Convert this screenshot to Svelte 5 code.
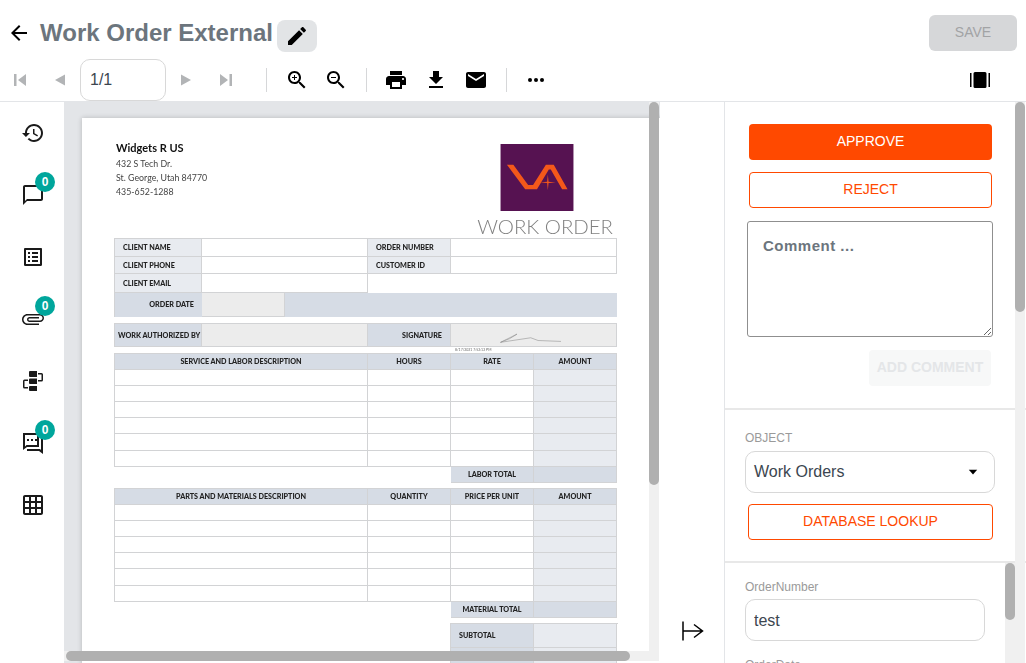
<script>
  const sideItems = [
    { name: "history", badge: false, d: "M13 3c-4.97 0-9 4.03-9 9H1l3.89 3.89.07.14L9 12H6c0-3.87 3.13-7 7-7s7 3.13 7 7-3.13 7-7 7c-1.93 0-3.68-.79-4.94-2.06l-1.42 1.42C8.27 19.99 10.51 21 13 21c4.97 0 9-4.03 9-9s-4.03-9-9-9zm-1 5v5l4.28 2.54.72-1.21-3.5-2.08V8H12z" },
    { name: "comments", badge: true, d: "M20 2H4c-1.1 0-2 .9-2 2v18l4-4h14c1.1 0 2-.9 2-2V4c0-1.1-.9-2-2-2zm0 14H6l-2 2V4h16v12z" },
    { name: "fields", badge: false, d: "M19 5v14H5V5h14m1.1-2H3.9c-.5 0-.9.4-.9.9v16.2c0 .4.4.9.9.9h16.2c.4 0 .9-.5.9-.9V3.9c0-.5-.5-.9-.9-.9zM11 7h6v2h-6V7zm0 4h6v2h-6v-2zm0 4h6v2h-6zM7 7h2v2H7zm0 4h2v2H7zm0 4h2v2H7z" },
    { name: "attachments", badge: true, rot: true, d: "M16.5 6v11.5c0 2.21-1.79 4-4 4s-4-1.79-4-4V5c0-1.38 1.12-2.5 2.5-2.5s2.5 1.12 2.5 2.5v10.5c0 .55-.45 1-1 1s-1-.45-1-1V6H10v9.5c0 1.38 1.12 2.5 2.5 2.5s2.5-1.12 2.5-2.5V5c0-2.21-1.79-4-4-4S7 2.79 7 5v12.5c0 3.04 2.46 5.5 5.5 5.5s5.5-2.46 5.5-5.5V6h-1.5z" },
    { name: "workflow", badge: false, d: "M9 2h7v6H9a1 1 0 0 1-1-1V3a1 1 0 0 1 1-1zM9 9.5h7V15H9a1 1 0 0 1-1-1v-3.5a1 1 0 0 1 1-1zM9 17h7v5H9a1 1 0 0 1-1-1v-3a1 1 0 0 1 1-1zM17 4h3.500a1.500 1.500 0 0 1 1.500 1.500V11a1.500 1.500 0 0 1-1.500 1.500H17V11h3.500V5.500H17zM7 10.500H3.500A1.500 1.500 0 0 0 2 12v6a1.500 1.500 0 0 0 1.500 1.500H7V18H3.500v-6H7z" },
    { name: "conversation", badge: true, d: "M2 2h16v14H6l-4 3zM4 4v11.500L5.500 14H16V4zM6 8h2v2H6zM10 8h2v2h-2zM14 8h2v2h-2zM20 6h2v17l-4-3H6v-2h13l1 1z" },
    { name: "table", badge: false, d: "M20 2H4c-1.100 0-2 .9-2 2v16c0 1.100.9 2 2 2h16c1.100 0 2-.9 2-2V4c0-1.100-.9-2-2-2zM8 20H4v-4h4v4zm0-6H4v-4h4v4zm0-6H4V4h4v4zm6 12h-4v-4h4v4zm0-6h-4v-4h4v4zm0-6h-4V4h4v4zm6 12h-4v-4h4v4zm0-6h-4v-4h4v4zm0-6h-4V4h4v4z" },
  ];

  const blankRows = [1, 2, 3, 4, 5, 6];
</script>

<div class="app">
  <header class="header">
    <div class="title-row">
      <button class="back" aria-label="Back">
        <svg width="24" height="24" viewBox="0 0 24 24"><path d="M20 11H7.830l5.590-5.590L12 4l-8 8 8 8 1.410-1.410L7.830 13H20v-2z"/></svg>
      </button>
      <h1>Work Order External</h1>
      <button class="edit" aria-label="Edit name">
        <svg width="24" height="24" viewBox="0 0 24 24"><path d="M3 17.250V21h3.750L17.810 9.940l-3.750-3.750L3 17.250zM20.710 7.040c.39-.39.39-1.020 0-1.410l-2.340-2.340c-.39-.39-1.020-.39-1.410 0l-1.830 1.830 3.750 3.750 1.830-1.830z"/></svg>
      </button>
      <button class="save" disabled>SAVE</button>
    </div>

    <div class="toolbar">
      <button class="tool off" aria-label="First page">
        <svg width="24" height="24" viewBox="0 0 24 24"><path d="M6 6h2.500v12H6zM18 6v12l-8-6z"/></svg>
      </button>
      <button class="tool off" aria-label="Previous page">
        <svg width="24" height="24" viewBox="0 0 24 24"><path d="M17 6.500v11L7 12z"/></svg>
      </button>
      <div class="page-box">1/1</div>
      <button class="tool off" aria-label="Next page">
        <svg width="24" height="24" viewBox="0 0 24 24"><path d="M7 6.500v11L17 12z"/></svg>
      </button>
      <button class="tool off" aria-label="Last page">
        <svg width="24" height="24" viewBox="0 0 24 24"><path d="M18 6h-2.500v12H18zM6 6v12l8-6z"/></svg>
      </button>
      <span class="sep first"></span>
      <button class="tool narrow" aria-label="Zoom in">
        <svg width="24" height="24" viewBox="0 0 24 24"><path d="M15.500 14h-.79l-.28-.27C15.410 12.590 16 11.110 16 9.500 16 5.910 13.090 3 9.500 3S3 5.910 3 9.500 5.910 16 9.500 16c1.610 0 3.090-.59 4.230-1.570l.27.28v.79l5 4.990L20.490 19l-4.990-5zm-6 0C7.010 14 5 11.990 5 9.500S7.010 5 9.500 5 14 7.010 14 9.500 11.990 14 9.500 14z"/><path d="M12 10h-2v2H9v-2H7V9h2V7h1v2h2v1z"/></svg>
      </button>
      <button class="tool narrow" aria-label="Zoom out">
        <svg width="24" height="24" viewBox="0 0 24 24"><path d="M15.500 14h-.79l-.28-.27C15.410 12.590 16 11.110 16 9.500 16 5.910 13.090 3 9.500 3S3 5.910 3 9.500 5.910 16 9.500 16c1.610 0 3.090-.59 4.230-1.570l.27.28v.79l5 4.990L20.490 19l-4.990-5zm-6 0C7.010 14 5 11.990 5 9.500S7.010 5 9.500 5 14 7.010 14 9.500 11.990 14 9.500 14z"/><path d="M7 9h5v1H7z"/></svg>
      </button>
      <span class="sep"></span>
      <button class="tool" aria-label="Print">
        <svg width="24" height="24" viewBox="0 0 24 24"><path d="M19 8H5c-1.660 0-3 1.340-3 3v6h4v4h12v-4h4v-6c0-1.660-1.340-3-3-3zm-3 11H8v-5h8v5zm3-7c-.55 0-1-.45-1-1s.45-1 1-1 1 .45 1 1-.45 1-1 1zm-1-9H6v4h12V3z"/></svg>
      </button>
      <button class="tool" aria-label="Download">
        <svg width="24" height="24" viewBox="0 0 24 24"><path d="M19 9h-4V3H9v6H5l7 7 7-7zM5 18v2h14v-2H5z"/></svg>
      </button>
      <button class="tool" aria-label="Email">
        <svg width="24" height="24" viewBox="0 0 24 24"><path d="M20 4H4c-1.100 0-1.990.9-1.990 2L2 18c0 1.100.9 2 2 2h16c1.100 0 2-.9 2-2V6c0-1.100-.9-2-2-2zm0 4l-8 5-8-5V6l8 5 8-5v2z"/></svg>
      </button>
      <span class="sep last"></span>
      <button class="tool" aria-label="More">
        <svg width="24" height="24" viewBox="0 0 24 24"><circle cx="6" cy="12" r="2"/><circle cx="12" cy="12" r="2"/><circle cx="18" cy="12" r="2"/></svg>
      </button>
      <button class="tool view" aria-label="Page view">
        <svg width="24" height="24" viewBox="0 0 24 24"><path d="M2 5h1.500v14H2zM20.500 5H22v14h-1.500zM7 4h10a1.500 1.500 0 0 1 1.500 1.500v13A1.500 1.500 0 0 1 17 20H7a1.500 1.500 0 0 1-1.500-1.500v-13A1.500 1.500 0 0 1 7 4z"/></svg>
      </button>
    </div>
  </header>

  <main class="main">
    <nav class="sidebar">
      {#each sideItems as item}
        <button class="side-item" aria-label={item.name}>
          <svg class:rot={item.rot} width="24" height="24" viewBox="0 0 24 24"><path d={item.d}/></svg>
          {#if item.badge}
            <span class="badge">0</span>
          {/if}
        </button>
      {/each}
    </nav>

    <section class="viewer">
      <div class="sheet">
        <div class="sheet-head">
          <div class="company">
            <div class="company-name">Widgets R US</div>
            <div>432 S Tech Dr.</div>
            <div>St. George, Utah 84770</div>
            <div>435-652-1288</div>
          </div>
          <div class="brand">
            <svg class="logo" width="74" height="68" viewBox="0 0 74 68">
              <rect width="74" height="68" fill="#561251"/>
              <path d="M6.500 21H13l15 20.500h5L46 21h8l14 25h-5.500L51 26h-2L37 46H25z" fill="#f4581a"/>
              <path d="M48 31l.7 7.300 7.300.7-7.300.7-.7 7.300-.7-7.300-7.300-.7 7.300-.7z" fill="#f4581a"/>
            </svg>
            <div class="brand-title">WORK ORDER</div>
          </div>
        </div>

        <div class="grid client">
          <div class="cell label">CLIENT NAME</div><div class="cell"></div>
          <div class="cell label">ORDER NUMBER</div><div class="cell"></div>
          <div class="cell label">CLIENT PHONE</div><div class="cell"></div>
          <div class="cell label">CUSTOMER ID</div><div class="cell"></div>
          <div class="cell label">CLIENT EMAIL</div><div class="cell"></div>
          <div class="cell-empty"></div>
          <div class="order-date">
            <div class="cell label strong right">ORDER DATE</div>
            <div class="cell gray"></div>
            <div class="cell strong"></div>
          </div>
        </div>

        <div class="grid auth">
          <div class="cell label strong">WORK AUTHORIZED BY</div>
          <div class="cell gray"></div>
          <div class="cell label strong right">SIGNATURE</div>
          <div class="cell gray">
            <svg class="signature" viewBox="0 0 166 24">
              <path d="M47 20L65 11l-8 5-10 4 33-5 8 3 25 1" fill="none" stroke="#8a8a8a" stroke-width=".6"/>
            </svg>
          </div>
        </div>
        <div class="timestamp">8/17/2021 7:52:12 PM</div>

        <div class="grid lines">
          <div class="cell head">SERVICE AND LABOR DESCRIPTION</div>
          <div class="cell head">HOURS</div>
          <div class="cell head">RATE</div>
          <div class="cell head">AMOUNT</div>
          {#each blankRows as r (r)}
            <div class="cell row"></div><div class="cell row"></div><div class="cell row"></div><div class="cell row tint"></div>
          {/each}
          <div class="cell-gap"></div>
          <div class="cell head total">LABOR TOTAL</div>
          <div class="cell head total"></div>
        </div>

        <div class="grid lines second">
          <div class="cell head">PARTS AND MATERIALS DESCRIPTION</div>
          <div class="cell head">QUANTITY</div>
          <div class="cell head">PRICE PER UNIT</div>
          <div class="cell head">AMOUNT</div>
          {#each blankRows as r (r)}
            <div class="cell row"></div><div class="cell row"></div><div class="cell row"></div><div class="cell row tint"></div>
          {/each}
          <div class="cell-gap"></div>
          <div class="cell head total">MATERIAL TOTAL</div>
          <div class="cell head total"></div>
        </div>

        <div class="summary">
          <div class="cell label strong">SUBTOTAL</div>
          <div class="cell tint"></div>
          <div class="cell label strong"></div>
          <div class="cell tint"></div>
        </div>
      </div>

      <div class="bar-track vertical"><div class="bar-thumb"></div></div>
      <div class="bar-track horizontal"><div class="bar-thumb"></div></div>
    </section>

    <div class="gutter">
      <button class="collapse" aria-label="Collapse panel">
        <svg width="24" height="24" viewBox="0 0 24 24" fill="none" stroke="#000" stroke-width="1.500"><path d="M3 2.500v19M3 12h19M14 5.500L22.500 12 14 18.500"/></svg>
      </button>
    </div>

    <aside class="panel">
      <section class="actions">
        <button class="btn solid">APPROVE</button>
        <button class="btn outline">REJECT</button>
        <textarea class="comment" placeholder="Comment ..."></textarea>
        <button class="add-comment" disabled>ADD COMMENT</button>
      </section>

      <section class="object">
        <div class="field-label">OBJECT</div>
        <div class="select">
          <span>Work Orders</span>
          <svg width="10" height="6" viewBox="0 0 10 6"><path d="M.8.8h8.400L5 5.400z"/></svg>
        </div>
        <button class="btn outline lookup">DATABASE LOOKUP</button>
      </section>

      <section class="fields">
        <div class="field-label">OrderNumber</div>
        <input class="text-input" value="test" />
        <div class="field-label next">OrderDate</div>
        <div class="bar-track inner"><div class="bar-thumb"></div></div>
      </section>

      <div class="bar-track outer"><div class="bar-thumb"></div></div>
    </aside>
  </main>
</div>

<style>
  :global(body) {
    font-family: "Liberation Sans", Arial, sans-serif;
    background: #fff;
  }
  button {
    font-family: inherit;
    border: none;
    background: none;
    padding: 0;
  }
  .app {
    width: 1026px;
    height: 663px;
    display: flex;
    flex-direction: column;
    overflow: hidden;
  }

  /* header */
  .header {
    height: 102px;
    box-sizing: border-box;
    border-bottom: 1px solid #e3e5e8;
  }
  .title-row {
    display: flex;
    align-items: center;
    height: 36px;
    padding: 15px 9px 8px 7px;
  }
  .back {
    display: flex;
    width: 33px;
  }
  h1 {
    margin: 0 4px 0 0;
    font-size: 24px;
    font-weight: 700;
    color: #6c757d;
    white-space: nowrap;
  }
  .edit {
    display: flex;
    align-items: center;
    justify-content: center;
    width: 40px;
    height: 32px;
    margin-top: 6px;
    background: #e2e4e6;
    border-radius: 8px;
  }
  .save {
    margin-left: auto;
    width: 88px;
    height: 36px;
    background: #d6d7d9;
    border-radius: 6px;
    color: #a2a3a5;
    font-size: 14px;
    padding-bottom: 2px;
  }
  .toolbar {
    display: flex;
    align-items: center;
    height: 42px;
  }
  .tool {
    display: flex;
    align-items: center;
    justify-content: center;
    width: 40px;
    height: 42px;
  }
  .tool.narrow {
    width: 39px;
  }
  .tool.off svg {
    fill: #b2b4b6;
  }
  .tool.view {
    margin: 0 26px 0 auto;
  }
  .page-box {
    display: flex;
    align-items: center;
    width: 86px;
    height: 42px;
    box-sizing: border-box;
    padding-left: 9px;
    border: 1px solid #d8d8d8;
    border-radius: 10px;
    font-size: 16px;
    color: #3c4650;
  }
  .sep {
    width: 1px;
    height: 24px;
    margin: 0 9px 0 11px;
    background: #d6d7d9;
  }
  .sep.first {
    margin-left: 20px;
    margin-right: 10px;
  }
  .sep.last {
    margin-left: 10px;
  }

  /* layout */
  .main {
    flex: 1;
    display: flex;
    min-height: 0;
  }
  .sidebar {
    width: 64px;
    flex: none;
  }
  .side-item {
    position: relative;
    display: flex;
    align-items: center;
    justify-content: center;
    width: 64px;
    height: 62px;
    padding-left: 2px;
  }
  .side-item svg {
    fill: #1a1a1a;
  }
  .side-item svg.rot {
    transform: rotate(90deg);
  }
  .badge {
    position: absolute;
    left: 35px;
    top: 8px;
    width: 20px;
    height: 20px;
    line-height: 20px;
    border-radius: 50%;
    background: #00a69c;
    color: #fff;
    font-size: 12px;
    font-weight: 700;
    text-align: center;
  }

  /* document viewer */
  .viewer {
    position: relative;
    width: 596px;
    flex: none;
    box-sizing: border-box;
    padding: 16px 0 0 18px;
    background: #e3e5e8;
    overflow: hidden;
  }
  .sheet {
    width: 600px;
    height: 700px;
    box-sizing: border-box;
    padding-left: 32px;
    background: #fff;
    box-shadow: 0 0 5px rgba(0, 0, 0, 0.2);
    font-family: Lato, "Liberation Sans", sans-serif;
    filter: blur(0.4px);
  }
  .sheet-head {
    display: flex;
    justify-content: space-between;
    width: 503px;
    height: 120px;
  }
  .company {
    padding: 23px 0 0 2px;
    font-size: 8.800px;
    line-height: 14px;
    color: #444;
  }
  .company-name {
    margin-bottom: 2px;
    font-size: 11px;
    font-weight: 700;
    color: #111;
  }
  .brand {
    display: flex;
    flex-direction: column;
    align-items: flex-end;
    padding: 26px 4px 0 0;
  }
  .logo {
    display: block;
    margin-right: 39px;
  }
  .brand-title {
    margin-top: 3px;
    font-size: 20.400px;
    font-weight: 300;
    line-height: 24px;
    color: #808080;
    white-space: nowrap;
  }

  .grid {
    display: grid;
    width: 503px;
    box-sizing: border-box;
    border-top: 1px solid #d2d3d5;
    border-left: 1px solid #d2d3d5;
  }
  .cell {
    box-sizing: border-box;
    min-width: 0;
    border-right: 1px solid #d2d3d5;
    border-bottom: 1px solid #d2d3d5;
    font-size: 7.200px;
    font-weight: 900;
    color: #222;
  }
  .client {
    grid-template-columns: 87px 166px 83px 1fr;
    grid-template-rows: 18px 17px 19px 24px;
  }
  .auth {
    grid-template-columns: 87px 166px 83px 1fr;
    grid-template-rows: 23px;
    margin-top: 6px;
  }
  .label {
    display: flex;
    align-items: center;
    padding-left: 8px;
    background: #e8ebf0;
  }
  .label.strong,
  .strong {
    background: #d6dce5;
    border-color: #d6dce5;
  }
  .auth .label.strong {
    padding-left: 3px;
    border-color: #d2d3d5;
    white-space: nowrap;
  }
  .right {
    justify-content: flex-end;
    padding: 0 7px 0 0;
  }
  .auth .right {
    padding: 0 8px 0 0;
  }
  .gray {
    background: #ececec;
  }
  .order-date {
    grid-column: 1 / -1;
    display: grid;
    grid-template-columns: 87px 83px 1fr;
  }
  .signature {
    display: block;
    width: 100%;
    height: 100%;
  }
  .timestamp {
    height: 6px;
    padding-left: 341px;
    font-size: 3.500px;
    line-height: 6px;
    color: #666;
    white-space: nowrap;
  }
  .lines {
    grid-template-columns: 253px 83px 83px 1fr;
    grid-auto-rows: 16.100px;
  }
  .lines.second {
    margin-top: 5px;
    grid-auto-rows: 16.150px;
  }
  .head {
    display: flex;
    align-items: center;
    justify-content: center;
    background: #d6dce5;
    white-space: nowrap;
  }
  .tint {
    background: #e8ebf0;
  }
  .cell-gap {
    grid-column: 1 / 3;
    margin-left: -1px;
    background: #fff;
  }
  .summary {
    display: grid;
    grid-template-columns: 83px 83px;
    grid-auto-rows: 24px;
    width: 167px;
    margin: 5px 0 0 336px;
    border-top: 1px solid #d2d3d5;
    border-left: 1px solid #d2d3d5;
  }
  .summary .label {
    border-color: #d2d3d5;
  }

  /* scrollbars */
  .bar-track {
    position: absolute;
    background: #f0f0f0;
  }
  .bar-thumb {
    background: #b0b0b0;
    border-radius: 5px;
  }
  .vertical {
    left: 585px;
    top: 0;
    width: 10px;
    height: 549px;
  }
  .vertical .bar-thumb {
    height: 383px;
  }
  .horizontal {
    left: 0;
    top: 549px;
    width: 595px;
    height: 10px;
  }
  .horizontal .bar-thumb {
    width: 564px;
    height: 10px;
    margin-left: 2px;
  }
  .outer {
    right: 1px;
    top: 0;
    width: 10px;
    height: 561px;
  }
  .outer .bar-thumb {
    height: 210px;
  }
  .inner {
    right: 11px;
    top: 0;
    width: 10px;
    height: 100px;
  }
  .inner .bar-thumb {
    height: 57px;
  }

  .gutter {
    display: flex;
    align-items: flex-end;
    justify-content: center;
    width: 65px;
    flex: none;
    box-sizing: border-box;
    padding: 0 1px 20px 0;
    border-right: 1px solid #e3e5e8;
  }
  .collapse {
    display: flex;
  }

  /* right panel */
  .panel {
    position: relative;
    flex: 1;
    display: flex;
    flex-direction: column;
    min-width: 0;
  }
  .actions {
    display: flex;
    flex-direction: column;
    align-items: flex-start;
    height: 308px;
    box-sizing: border-box;
    padding: 22px 0 0 24px;
    border-bottom: 2px solid #e8e8e8;
  }
  .btn {
    display: block;
    width: 243px;
    height: 36px;
    padding-bottom: 2px;
    border-radius: 4px;
    font-size: 14px;
  }
  .solid {
    background: #ff4900;
    color: #fff;
  }
  .outline {
    border: 1px solid #ff4900;
    color: #ff4900;
    background: #fff;
  }
  .actions .outline {
    margin-top: 12px;
  }
  .comment {
    display: block;
    width: 246px;
    height: 116px;
    box-sizing: border-box;
    margin: 13px 0 0 -2px;
    padding: 15px 15px;
    border: 1px solid #8f8f8f;
    border-radius: 3px;
    font-family: inherit;
    font-size: 15px;
    outline: none;
  }
  .comment::placeholder {
    color: #6c757d;
    font-weight: 700;
    letter-spacing: 0.5px;
    opacity: 1;
  }
  .add-comment {
    align-self: flex-end;
    width: 122px;
    height: 36px;
    margin: 13px 35px 0 0;
    padding-bottom: 2px;
    background: #f7f8f8;
    border-radius: 4px;
    color: #e4e6e8;
    font-size: 14px;
    font-weight: 700;
    white-space: nowrap;
  }
  .object {
    height: 153px;
    box-sizing: border-box;
    padding: 21px 0 0 20px;
    border-bottom: 2px solid #e8e8e8;
  }
  .field-label {
    height: 14px;
    font-size: 12px;
    line-height: 14px;
    color: #9a9a9a;
  }
  .select {
    display: flex;
    align-items: center;
    justify-content: space-between;
    width: 250px;
    height: 42px;
    box-sizing: border-box;
    margin-top: 6px;
    padding: 0 16px 0 8px;
    border: 1px solid #d8d8d8;
    border-radius: 10px;
    font-size: 16px;
    color: #3c4650;
  }
  .lookup {
    width: 245px;
    margin: 11px 0 0 3px;
  }
  .fields {
    position: relative;
    flex: 1;
    min-height: 0;
    padding: 17px 0 0 20px;
    overflow: hidden;
  }
  .text-input {
    display: block;
    width: 240px;
    height: 42px;
    box-sizing: border-box;
    margin-top: 5px;
    padding: 2px 8px 0;
    border: 1px solid #d8d8d8;
    border-radius: 10px;
    font-family: inherit;
    font-size: 16px;
    color: #3c4650;
    outline: none;
  }
  .field-label.next {
    margin-top: 17px;
  }
</style>
